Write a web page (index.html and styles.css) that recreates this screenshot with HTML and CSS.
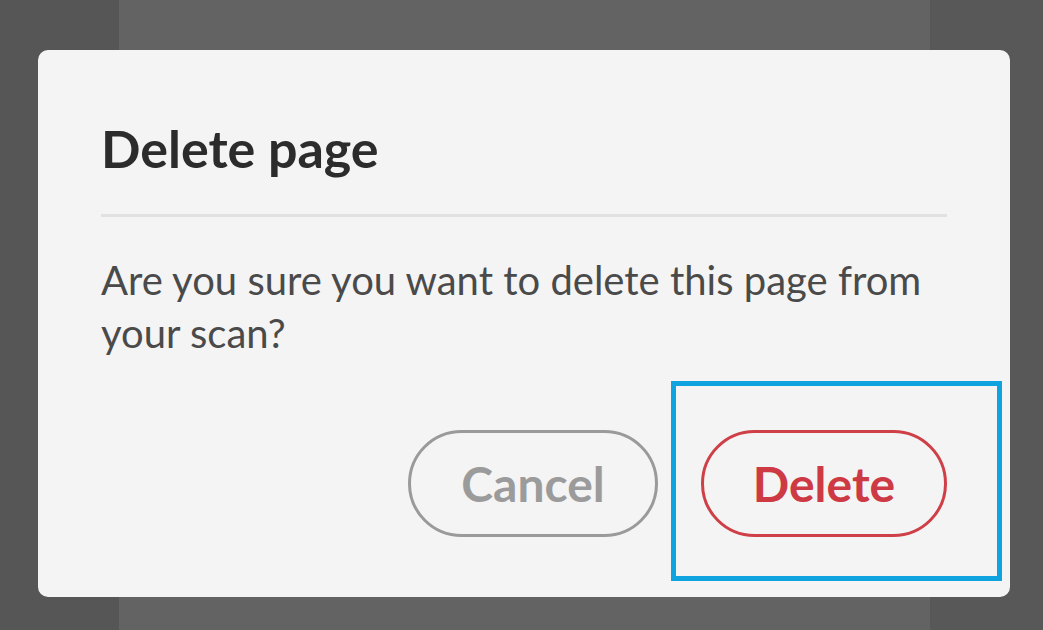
FILE: index.html
```html
<!DOCTYPE html>
<html>
<head>
<meta charset="utf-8">
<link rel="stylesheet" href="styles.css">
</head>
<body>
<div class="backdrop">
  <div class="side left"></div>
  <div class="center"></div>
  <div class="side right"></div>
</div>
<div class="dialog">
  <h1 class="title">Delete page</h1>
  <div class="divider"></div>
  <p class="message">Are you sure you want to delete this page from your scan?</p>
  <div class="actions">
    <button class="btn btn-cancel">Cancel</button>
    <div class="focus-wrap">
      <button class="btn btn-delete">Delete</button>
      <div class="highlight"></div>
    </div>
  </div>
</div>
</body>
</html>
```
FILE: styles.css
```css
* { box-sizing: border-box; }
html, body { margin: 0; padding: 0; }
body {
  width: 1043px;
  height: 630px;
  overflow: hidden;
  position: relative;
  font-family: "Lato", "Open Sans", sans-serif;
}
.backdrop {
  display: flex;
  height: 630px;
}
.side { background: #565656; }
.left { width: 119px; }
.right { flex: 1; background: #585858; }
.center { width: 811px; background: #636363; }
.dialog {
  position: absolute;
  left: 38px;
  top: 50px;
  width: 972px;
  height: 547px;
  background: #f4f4f4;
  border-radius: 10px;
  padding: 0 63px;
}
.title {
  margin: 0;
  padding-top: 70px;
  font-size: 52px;
  line-height: 56px;
  font-weight: 700;
  color: #2c2c2c;
}
.divider {
  margin-top: 38px;
  height: 3px;
  background: #e1e1e1;
}
.message {
  margin: 37px 0 0;
  font-size: 40px;
  line-height: 53px;
  color: #4a4a4a;
}
.actions {
  display: flex;
  justify-content: flex-end;
  align-items: center;
  gap: 43px;
  margin-top: 70px;
}
.btn {
  font-family: inherit;
  font-weight: 700;
  font-size: 48px;
  background: transparent;
  border-radius: 54px;
  border: 3px solid;
  height: 107px;
  padding: 0;
}
.btn-cancel {
  width: 250px;
  border-color: #9a9a9a;
  color: #9b9b9b;
}
.btn-delete {
  width: 246px;
  border-color: #cf3f47;
  color: #cd3a43;
}
.focus-wrap { position: relative; }
.highlight {
  position: absolute;
  left: -30px;
  top: -49px;
  width: 331px;
  height: 200px;
  border: 5px solid #0fa3e0;
}
```
